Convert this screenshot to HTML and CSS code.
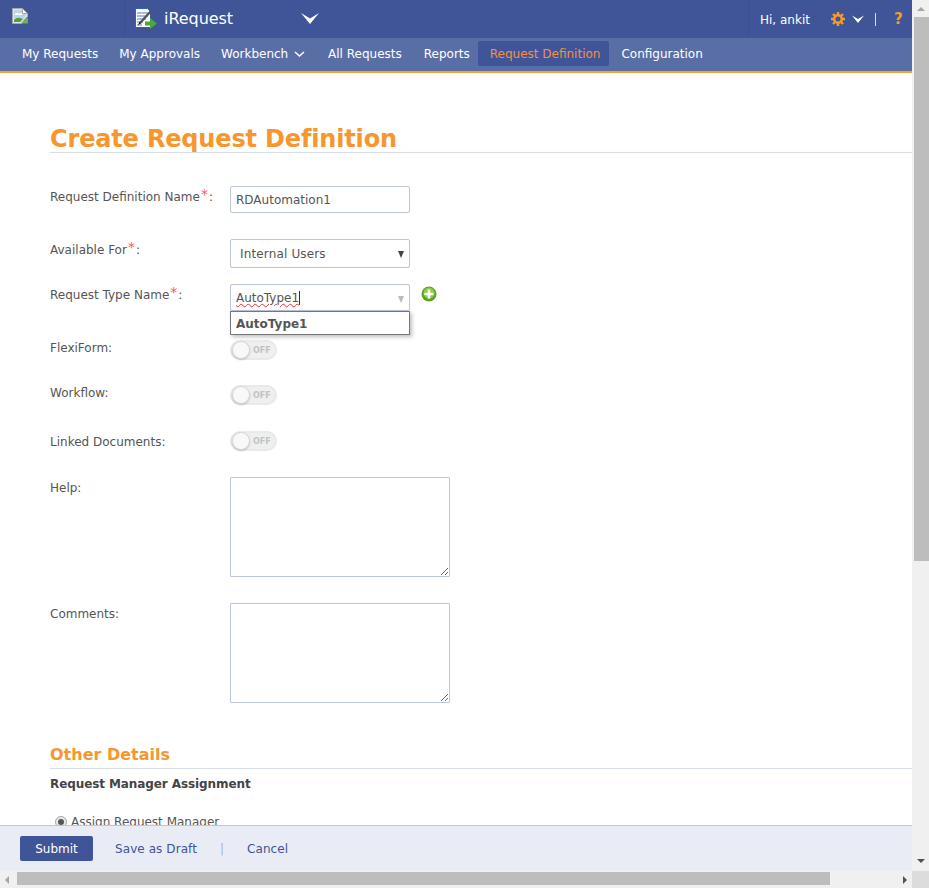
FILE: index.html
```html
<!DOCTYPE html>
<html>
    <head>
        <title>iRequest</title>
        <link rel="stylesheet" href="styles.css">
    </head>
    <body>
        <div class="window">
            <div class="page">
                <header class="topbar">
                    <div class="logo">
                        <svg width="16" height="16" viewBox="0 0 16 16">
                            <path d="M.5.5h10l5 5v3l-6 7h-9z" fill="#e4e4e0" stroke="#a8a8a4"/>
                            <path d="M2 2h8v4h4v2l-5 6H2z" fill="#bcd3ec"/>
                            <path d="M3 6q1-2 3-1t3 0l1 1v1H3z" fill="#fff"/>
                            <path d="M2 14V12q3-3 6-2l3 1-3 3z" fill="#4f9e3f"/>
                            <path d="M13 11l3-1v5.500H9.500z" fill="#6fae55"/>
                            <path d="M10.500.5v5h5z" fill="#fff" stroke="#a8a8a4"/>
                        </svg>
                    </div>
                    <div class="app">
                        <svg class="app-icon" width="22" height="21" viewBox="0 0 22 21">
                            <path d="M.5.500h12l3 3v16H.5z" fill="#fff" stroke="#2a62c4"/>
                            <path d="M2 5h11M2 8h11M2 11h9M2 14h6M2 17h5" stroke="#4a78c8"/>
                            <path d="M5 15L16 3" stroke="#555" stroke-width="2.500"/>
                            <path d="M3 17l1.500-3 1.500 1.500z" fill="#111"/>
                            <path d="M10 13.500h5V10l7 5.500-7 5.500v-3.500h-5z" fill="#49a83a"/>
                        </svg>
                        <span class="app-name">iRequest</span>
                        <svg class="app-caret" width="18" height="13" viewBox="0 0 18 13">
                            <path d="M0 1l9 5.500L18 1l-9 11z" fill="#fff"/>
                        </svg>
                    </div>
                    <div class="user">
                        <span class="hi">Hi, ankit</span>
                        <svg class="gear" width="14" height="14" viewBox="0 0 14 14">
                            <g stroke="#f79a2c" stroke-width="2.400">
                                <path d="M7 0v3M7 11v3M0 7h3M11 7h3M2 2l2 2M10 10l2 2M12 2l-2 2M4 10l-2 2"/>
                            </g>
                            <circle cx="7" cy="7" r="3.800" fill="none" stroke="#f79a2c" stroke-width="2.600"/>
                        </svg>
                        <svg class="user-caret" width="12" height="8" viewBox="0 0 12 8">
                            <path d="M0 .5l6 3.500 6-3.500-6 7.500z" fill="#fff"/>
                        </svg>
                        <span class="divider"></span>
                        <span class="help">?</span>
                    </div>
                </header>
                <nav class="menu">
                    <a>My Requests</a>
                    <a>My Approvals</a>
                    <a>Workbench
                        <svg class="menu-caret" width="11" height="7" viewBox="0 0 11 7">
                            <path d="M1 1l4.500 4L10 1" fill="none" stroke="#fff" stroke-width="1.500"/>
                        </svg>
                    </a>
                    <a>All Requests</a>
                    <a class="reports">Reports</a>
                    <a class="active">Request Definition</a>
                    <a>Configuration</a>
                </nav>
                <main class="content">
                    <h1>Create Request Definition</h1>
                    <form class="form" action="#">
                        <div class="row row-name">
                            <label>Request Definition Name<em>*</em>:</label>
                            <input class="field" type="text" value="RDAutomation1">
                        </div>
                        <div class="row row-avail">
                            <label>Available For<em>*</em>:</label>
                            <div class="field select">Internal Users<i class="arrow"></i></div>
                        </div>
                        <div class="row row-type">
                            <label>Request Type Name<em>*</em>:</label>
                            <div class="combo">
                                <div class="field combo-box"><span class="typed">AutoType1</span><span class="cursor"></span><i class="arrow light"></i></div>
                                <div class="combo-list">AutoType1</div>
                            </div>
                            <svg class="add" width="16" height="16" viewBox="0 0 16 16">
                                <circle cx="8" cy="8" r="7.500" fill="#5aa51f"/>
                                <circle cx="8" cy="7" r="5.500" fill="#8ccb45"/>
                                <path d="M8 3.500v9M3.500 8h9" stroke="#fff" stroke-width="2.600"/>
                            </svg>
                        </div>
                        <div class="row row-flexi">
                            <label>FlexiForm:</label>
                            <div class="toggle"><span class="knob"></span><span class="off">OFF</span></div>
                        </div>
                        <div class="row row-flow">
                            <label>Workflow:</label>
                            <div class="toggle"><span class="knob"></span><span class="off">OFF</span></div>
                        </div>
                        <div class="row row-linked">
                            <label>Linked Documents:</label>
                            <div class="toggle"><span class="knob"></span><span class="off">OFF</span></div>
                        </div>
                        <div class="row row-help">
                            <label>Help:</label>
                            <textarea></textarea>
                        </div>
                        <div class="row row-comments">
                            <label>Comments:</label>
                            <textarea></textarea>
                        </div>
                    </form>
                    <h2>Other Details</h2>
                    <h3>Request Manager Assignment</h3>
                    <div class="radio-row"><span class="radio"></span>Assign Request Manager</div>
                </main>
                <footer class="actions">
                    <button class="submit" type="button">Submit</button>
                    <a>Save as Draft</a>
                    <span class="sep">|</span>
                    <a>Cancel</a>
                </footer>
            </div>
            <div class="vscroll">
                <i class="tri up"></i>
                <div class="vtrack"><div class="vthumb"></div></div>
                <i class="tri down"></i>
            </div>
            <div class="hscroll">
                <i class="tri left"></i>
                <div class="htrack"><div class="hthumb"></div></div>
                <i class="tri right"></i>
            </div>
            <div class="corner"></div>
        </div>
    </body>
</html>
```
FILE: styles.css
```css
* {
    box-sizing: border-box;
}

html, body {
    height: 100%;
    margin: 0;
    overflow: hidden;
}

body {
    font-family: "DejaVu Sans", Verdana, sans-serif;
    font-size: 12px;
    color: #555;
    background: #fff;
}

.window {
    display: grid;
    grid-template-columns: 912px 17px;
    grid-template-rows: 871px 17px;
    height: 888px;
}

.page {
    display: flex;
    flex-direction: column;
    overflow: hidden;
}

/* top bar */
.topbar {
    flex: none;
    height: 38px;
    display: flex;
    align-items: stretch;
    background: #3f5597;
    color: #fff;
}

.logo {
    width: 125px;
    height: 35px;
    padding: 8px 0 0 12px;
    border-right: 1px solid #3b5090;
}

.app {
    display: flex;
    align-items: flex-start;
    flex: 1;
    padding: 8px 0 0 10px;
}

.app-name {
    margin: 1px 0 0 7px;
    font-size: 16px;
    line-height: 20px;
    letter-spacing: -.05px;
}

.app-caret {
    margin: 4px 0 0 68px;
}

.user {
    display: flex;
    align-items: flex-start;
    width: 164px;
    height: 35px;
    padding-left: 11px;
    border-left: 1px solid #3b5090;
}

.hi {
    margin-top: 13px;
    line-height: 15px;
    font-size: 12px;
}

.gear {
    margin: 12px 0 0 21px;
}

.user-caret {
    margin: 15px 0 0 7px;
}

.divider {
    width: 1px;
    height: 13px;
    margin: 13px 0 0 11px;
    background: #d5dbea;
}

.help {
    margin: 10px 0 0 18px;
    color: #f79a2c;
    font-size: 15px;
    font-weight: bold;
    line-height: 18px;
}

/* menu */
.menu {
    flex: none;
    height: 35px;
    display: flex;
    padding: 3px 0 0 10px;
    background: #5a6ea6;
    border-bottom: 2px solid #f9a533;
    color: #fff;
}

.menu a {
    height: 25px;
    padding: 0 9px 0 12px;
    line-height: 27px;
    white-space: nowrap;
}

.menu a.active {
    background: #3f5597;
    border-radius: 2px;
    color: #f58f45;
}

.menu-caret {
    margin-left: 2px;
}

.menu a:nth-child(3) {
    padding-right: 11px;
}

.menu a.reports {
    padding: 0 8px 0 13px;
}

/* form */
.content {
    flex: 1;
    min-height: 0;
    overflow: hidden;
    padding: 50px 0 0 50px;
}

h1 {
    height: 30px;
    margin: 0;
    border-bottom: 1px solid #d8deeb;
    color: #f7962f;
    font-size: 24px;
    line-height: 32px;
    letter-spacing: -.16px;
    font-weight: bold;
}

.form {
    padding-top: 33px;
}

.row {
    display: flex;
    align-items: flex-start;
}

.row label {
    flex: none;
    width: 180px;
    padding-top: 3px;
    line-height: 16px;
}

.row em {
    margin: 0 1px;
    color: #f55;
    font-style: normal;
    font-size: 14px;
    line-height: 10px;
    vertical-align: 2px;
}

.row-name { height: 53px; }
.row-avail { height: 45px; }
.row-type { height: 56px; }
.row-flexi { height: 45px; }
.row-flow { height: 46px; }
.row-linked { height: 46px; }
.row-help { height: 126px; }
.row-comments { height: 140px; }

.row-flexi label,
.row-flow label {
    padding-top: 0;
}

.field {
    display: block;
    width: 180px;
    height: 27px;
    border: 1px solid #bcc4de;
    border-radius: 2px;
    background: #fff;
    padding: 0 5px;
    font: inherit;
    color: #555;
}

.select {
    position: relative;
    height: 29px;
    padding: 0 9px;
    line-height: 28px;
    letter-spacing: .15px;
}

.arrow {
    position: absolute;
    top: 11px;
    right: 5px;
    border-left: 3.500px solid transparent;
    border-right: 3.500px solid transparent;
    border-top: 7px solid #444;
}

.arrow.light {
    border-top-color: #bbb;
}

.combo {
    position: relative;
    width: 180px;
}

.combo-box {
    position: relative;
    line-height: 26px;
    display: flex;
    align-items: flex-start;
}

.typed {
    text-decoration: underline wavy #e33 1px;
    text-underline-offset: 1px;
}

.cursor {
    width: 1px;
    height: 14px;
    margin-top: 6px;
    background: #333;
}

.combo-list {
    position: absolute;
    top: 27px;
    left: 0;
    width: 180px;
    height: 24px;
    padding-left: 5px;
    border: 1px solid #777;
    background: #fff;
    box-shadow: 2px 2px 4px rgba(0, 0, 0, .25);
    font-weight: bold;
    line-height: 24px;
}

.add {
    margin: 2px 0 0 11px;
}

.toggle {
    position: relative;
    width: 47px;
    height: 20px;
    border-radius: 10px;
    border: 2px solid #e8e9e9;
    background: #eeefef;
}

.knob {
    position: absolute;
    top: -1px;
    left: 0;
    width: 18px;
    height: 18px;
    border-radius: 50%;
    background: #f8f8f8;
    border: 1px solid #d8d8d8;
    box-shadow: 0 1px 2px rgba(0, 0, 0, .2);
}

.off {
    position: absolute;
    top: 4px;
    left: 21px;
    color: #c2c2c2;
    font-size: 8px;
    font-weight: bold;
    line-height: 10px;
}

textarea {
    display: block;
    width: 220px;
    height: 100px;
    margin: 0;
    border: 1px solid #bcc4de;
    border-radius: 1px;
    background: #fff;
}

h2 {
    height: 26px;
    margin: 0;
    border-bottom: 1px solid #d8deeb;
    color: #f7962f;
    font-size: 16px;
    line-height: 24px;
    font-weight: bold;
}

h3 {
    margin: 7px 0 0;
    color: #444;
    font-size: 12px;
    line-height: 16px;
    letter-spacing: -.09px;
    font-weight: bold;
}

.radio-row {
    display: flex;
    align-items: center;
    margin: 22px 0 0 5px;
    line-height: 16px;
}

.radio {
    width: 12px;
    height: 12px;
    margin-right: 4px;
    border-radius: 50%;
    border: 3px solid #e8e8e8;
    outline: 1px solid #aaa;
    outline-offset: -1px;
    background: #555;
}

/* footer */
.actions {
    flex: none;
    height: 46px;
    display: flex;
    align-items: center;
    padding: 0 0 0 20px;
    background: #e9ecf5;
    border-top: 1px solid #bcc4de;
    color: #3f5597;
}

.submit {
    width: 73px;
    height: 25px;
    padding: 0;
    border: 0;
    border-radius: 2px;
    background: #3f5597;
    color: #fff;
    font: inherit;
}

.actions a {
    margin-left: 22px;
    letter-spacing: .08px;
}

.sep {
    margin-left: 23px;
    color: #a9b2d0;
}

.actions a:last-child {
    margin-left: 23px;
}

/* scrollbars */
.vscroll, .hscroll {
    display: flex;
    align-items: center;
    background: #f0f0f0;
}

.vscroll {
    flex-direction: column;
    padding: 0 0 4px;
}

.vtrack {
    flex: 1;
    width: 100%;
}

.vthumb {
    width: 100%;
    height: 544px;
    background: #bdbdbd;
    border-left: 2px solid #f0f0f0;
}

.hscroll {
    padding: 0 5px 0 5px;
}

.htrack {
    flex: 1;
    height: 100%;
    padding: 1px 0 1px 8px;
}

.hthumb {
    width: 813px;
    height: 13px;
    background: #bdbdbd;
}

.corner {
    background: #dcdcdc;
}

.tri {
    flex: none;
    width: 0;
    height: 0;
}

.tri.up {
    margin-top: 7px;
    border-left: 4px solid transparent;
    border-right: 4px solid transparent;
    border-bottom: 4px solid #a5a5a5;
    margin-bottom: 6px;
}

.tri.down {
    margin-bottom: 4px;
    border-left: 4px solid transparent;
    border-right: 4px solid transparent;
    border-top: 4px solid #505050;
}

.tri.left {
    border-top: 4px solid transparent;
    border-bottom: 4px solid transparent;
    border-right: 4px solid #a5a5a5;
}

.tri.right {
    border-top: 4px solid transparent;
    border-bottom: 4px solid transparent;
    border-left: 4px solid #505050;
}
```
